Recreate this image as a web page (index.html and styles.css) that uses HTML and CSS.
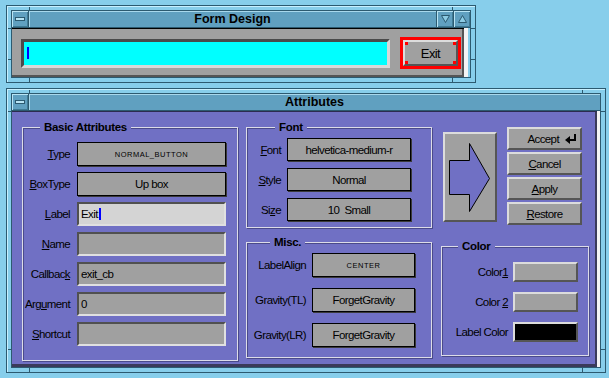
FILE: index.html
```html
<!DOCTYPE html>
<html lang="en">
<head>
  <meta charset="UTF-8" />
  <title>Form Design</title>
  <link rel="stylesheet" href="styles.css">
</head>
<body>
  <div class="window win-form">
    <div class="window-inner">
      <div class="titlebar">
        <span class="tb-btn tb-menu"><span class="menu-bar"></span></span>
        <span class="tb-title">Form Design</span>
        <span class="tb-btn tb-small">
          <svg width="9" height="8" viewBox="0 0 9 8"><polygon points="0.5,0.5 8.5,0.5 4.5,7.5" /></svg>
        </span>
        <span class="tb-btn tb-small">
          <svg width="9" height="8" viewBox="0 0 9 8"><polygon points="4.5,0.5 8.5,7.5 0.5,7.5" /></svg>
        </span>
      </div>
      <div class="win-body">
        <div class="form-panel">
          <div class="cyan-input"><span class="cursor"></span></div>
          <div class="exit-sel"><button class="raised exit-btn">Exit</button></div>
        </div>
        <div class="side-strip"></div>
      </div>
    </div>
  </div>

  <div class="window win-attr">
    <div class="window-inner">
      <div class="titlebar">
        <span class="tb-btn tb-menu"><span class="menu-bar"></span></span>
        <span class="tb-title">Attributes</span>
      </div>
      <div class="win-body">
        <div class="attr-panel">

          <div class="group basic">
            <h3 class="group-title">Basic Attributes</h3>
            <label><u>T</u>ype</label>
            <button class="choice small-caps">NORMAL_BUTTON</button>
            <label><u>B</u>oxType</label>
            <button class="choice">Up box</button>
            <label><u>L</u>abel</label>
            <div class="field focused">Exit<span class="caret"></span></div>
            <label><u>N</u>ame</label>
            <div class="field"></div>
            <label>Callbac<u>k</u></label>
            <div class="field">exit_cb</div>
            <label>Arg<u>u</u>ment</label>
            <div class="field">0</div>
            <label><u>S</u>hortcut</label>
            <div class="field"></div>
          </div>

          <div class="col-mid">
            <div class="group font-group">
              <h3 class="group-title">Font</h3>
              <label><u>F</u>ont</label>
              <button class="choice">helvetica-medium-r</button>
              <label><u>S</u>tyle</label>
              <button class="choice">Normal</button>
              <label>Si<u>z</u>e</label>
              <button class="choice">10&nbsp; Small</button>
            </div>
            <div class="group misc-group">
              <h3 class="group-title">Misc.</h3>
              <label>LabelAlign</label>
              <button class="choice small-caps">CENTER</button>
              <label>Gravity(TL)</label>
              <button class="choice">ForgetGravity</button>
              <label>Gravity(LR)</label>
              <button class="choice">ForgetGravity</button>
            </div>
          </div>

          <div class="col-right">
            <div class="actions">
              <button class="raised arrow-btn">
                <svg width="50" height="86" viewBox="0 0 50 86"><polygon points="4.5,26.5 24.5,26.5 24.5,9.5 44.5,44.5 24.5,77.5 24.5,60.5 4.5,60.5" /></svg>
              </button>
              <div class="action-list">
                <button class="raised action accept">Accept
                  <svg width="12" height="10" viewBox="0 0 12 10"><polygon points="0,6 5,2 5,10" /><rect x="4" y="5" width="7" height="2" /><rect x="9" y="0" width="2" height="7" /></svg>
                </button>
                <button class="raised action"><u>C</u>ancel</button>
                <button class="raised action"><u>A</u>pply</button>
                <button class="raised action"><u>R</u>estore</button>
              </div>
            </div>
            <div class="group color-group">
              <h3 class="group-title">Color</h3>
              <label>Color<u>1</u></label>
              <span class="raised swatch"></span>
              <label>Color <u>2</u></label>
              <span class="raised swatch"></span>
              <label>Label Color</label>
              <span class="raised swatch black"></span>
            </div>
          </div>

        </div>
        <div class="side-strip"></div>
      </div>
    </div>
  </div>
</body>
</html>
```

FILE: styles.css
```css
* {
  box-sizing: border-box;
}

body {
  margin: 0;
  width: 609px;
  height: 378px;
  overflow: hidden;
  background: #87ceeb;
  font-family: "Liberation Sans", Arial, sans-serif;
  font-size: 11.5px;
  letter-spacing: -0.6px;
  color: #000;
}

/* window frames, with the little resize-corner ticks */
.window {
  margin: 5px 0 0 6px;
  padding: 4px;
  border: 1px solid #2c5a70;
  box-shadow: inset 1px 1px 0 #c8f0ff;
  background:
    linear-gradient(#2c5a70, #2c5a70) left 22px top 0 / 1px 4px no-repeat,
    linear-gradient(#2c5a70, #2c5a70) right 22px top 0 / 1px 4px no-repeat,
    linear-gradient(#2c5a70, #2c5a70) left 22px bottom 0 / 1px 4px no-repeat,
    linear-gradient(#2c5a70, #2c5a70) right 22px bottom 0 / 1px 4px no-repeat,
    linear-gradient(#2c5a70, #2c5a70) left 0 top 22px / 4px 1px no-repeat,
    linear-gradient(#2c5a70, #2c5a70) right 0 top 22px / 4px 1px no-repeat,
    linear-gradient(#2c5a70, #2c5a70) left 0 bottom 22px / 4px 1px no-repeat,
    linear-gradient(#2c5a70, #2c5a70) right 0 bottom 22px / 4px 1px no-repeat,
    #87ceeb;
}

.win-form {
  width: 470px;
}

.win-attr {
  width: 600px;
}

.window-inner {
  border: 1px solid #2c5a70;
}

.titlebar {
  display: flex;
  height: 17px;
  background: #60a0c0;
  border-bottom: 1px solid #2c5a70;
}

.tb-btn {
  width: 17px;
  display: flex;
  align-items: center;
  justify-content: center;
  box-shadow: inset 1px 1px 0 #b8e4f4, inset -1px -1px 0 #3f7a94;
}

.tb-menu {
  border-right: 1px solid #2c5a70;
}

.tb-small {
  border-left: 1px solid #2c5a70;
}

.tb-small polygon {
  fill: #8ccbe4;
  stroke: #2c5a70;
}

.menu-bar {
  width: 10px;
  height: 4px;
  background: #b8e4f4;
  border: 1px solid #2c5a70;
}

.tb-title {
  flex: 1;
  text-align: center;
  font-weight: bold;
  font-size: 12.5px;
  letter-spacing: 0;
  line-height: 16px;
  box-shadow: inset 1px 1px 0 #a8d8ec;
}

.win-body {
  display: flex;
}

.side-strip {
  width: 6px;
  background: linear-gradient(to right, #f4f4f4 0 4px, #87ceeb 4px);
}

.win-attr .side-strip {
  width: 4px;
  background: linear-gradient(to right, #f4f4f4 0 3px, #87ceeb 3px);
}

/* form design window */
.form-panel {
  flex: 1;
  height: 49px;
  display: flex;
  align-items: center;
  gap: 10px;
  padding-left: 9px;
  background: #a0a0a0;
  border-top: 1px solid #000;
  box-shadow: inset -2px -2px 0 #555;
}

.cyan-input {
  width: 369px;
  height: 29px;
  display: flex;
  align-items: center;
  padding-left: 3px;
  background: #00ffff;
  border: 3px solid;
  border-color: #4a4a4a #d8d8d8 #d8d8d8 #4a4a4a;
}

.cursor {
  width: 2px;
  height: 12px;
  background: #0000ff;
}

.exit-sel {
  width: 61px;
  height: 32px;
  border: 3px solid #ff0000;
}

.raised {
  display: block;
  padding: 0;
  background: #a0a0a0;
  border: 2px solid;
  border-color: #dcdcdc #555 #555 #dcdcdc;
  font-family: inherit;
  font-size: 11.5px;
  letter-spacing: -0.6px;
  color: #000;
}

.exit-btn {
  width: 100%;
  height: 100%;
  font-size: 13px;
  background:
    linear-gradient(#ff0000, #ff0000) left top / 3px 3px no-repeat,
    linear-gradient(#ff0000, #ff0000) right top / 3px 3px no-repeat,
    linear-gradient(#ff0000, #ff0000) left bottom / 3px 3px no-repeat,
    linear-gradient(#ff0000, #ff0000) right bottom / 3px 3px no-repeat,
    #a0a0a0;
}

/* attributes window */
.attr-panel {
  flex: 1;
  display: flex;
  gap: 8px;
  padding: 15px 8px 6px 10px;
  background: #7070c4;
  border-top: 1px solid #2c2c50;
  box-shadow: inset -2px -3px 0 #3a3a5a;
}

.group {
  position: relative;
  display: grid;
  align-items: center;
  border: 1px solid #dcdce8;
  box-shadow: inset 1px 1px 0 #4a4a8a, 1px 1px 0 #4a4a8a;
}

.group-title {
  position: absolute;
  top: -7px;
  margin: 0;
  padding: 0 4px;
  background: #7070c4;
  font-weight: bold;
  font-size: 11.5px;
  letter-spacing: -0.3px;
  line-height: 13px;
}

.group label {
  text-align: right;
  white-space: nowrap;
}

.basic {
  width: 216px;
  grid-template-columns: 47px 149px;
  grid-auto-rows: 24px;
  column-gap: 7px;
  row-gap: 6px;
  padding: 14px 11px 14px 0;
}

.basic .group-title {
  left: 17px;
}

.choice {
  height: 100%;
  padding: 0;
  background: #a0a0a0;
  border: 1px solid #000;
  box-shadow: 1px 1px 0 #3a3a3a;
  font-family: inherit;
  font-size: 11.5px;
  letter-spacing: -0.6px;
  color: #000;
}

.choice.small-caps {
  font-size: 7.5px;
  letter-spacing: 0.5px;
}

.field {
  height: 100%;
  display: flex;
  align-items: center;
  padding-left: 2px;
  background: #a0a0a0;
  border: 2px solid;
  border-color: #505050 #e0e0e0 #e0e0e0 #505050;
}

.field.focused {
  background: #d4d4d4;
}

.caret {
  width: 2px;
  height: 12px;
  margin-left: 1px;
  background: #0000ff;
}

.col-mid {
  width: 186px;
}

.font-group {
  grid-template-columns: 34px 124px;
  grid-auto-rows: 23px;
  column-gap: 6px;
  row-gap: 7px;
  padding: 10px 20px 6px 0;
}

.font-group .group-title {
  left: 28px;
}

.misc-group {
  margin-top: 14px;
  grid-template-columns: 59px 103px;
  grid-auto-rows: 24px;
  column-gap: 6px;
  row-gap: 11px;
  padding: 10px 16px 10px 0;
}

.misc-group .group-title {
  left: 23px;
}

.col-right {
  width: 148px;
  margin-left: 1px;
}

.actions {
  display: flex;
  align-items: flex-start;
  gap: 10px;
  padding-left: 2px;
}

.arrow-btn {
  width: 54px;
  height: 90px;
  margin-top: 5px;
}

.arrow-btn svg {
  display: block;
}

.arrow-btn polygon {
  fill: #7070c4;
  stroke: #000;
}

.action-list {
  display: flex;
  flex-direction: column;
  gap: 2px;
  width: 75px;
}

.action {
  height: 23px;
}

.accept {
  display: flex;
  align-items: center;
  justify-content: flex-end;
  gap: 6px;
  padding-right: 3px;
}

.color-group {
  margin-top: 21px;
  grid-template-columns: 1fr 65px;
  grid-auto-rows: 20px;
  column-gap: 5px;
  row-gap: 10px;
  padding: 15px 10px 13px 0;
}

.color-group .group-title {
  left: 16px;
}

.swatch {
  height: 100%;
}

.swatch.black {
  background: #000;
}
```
